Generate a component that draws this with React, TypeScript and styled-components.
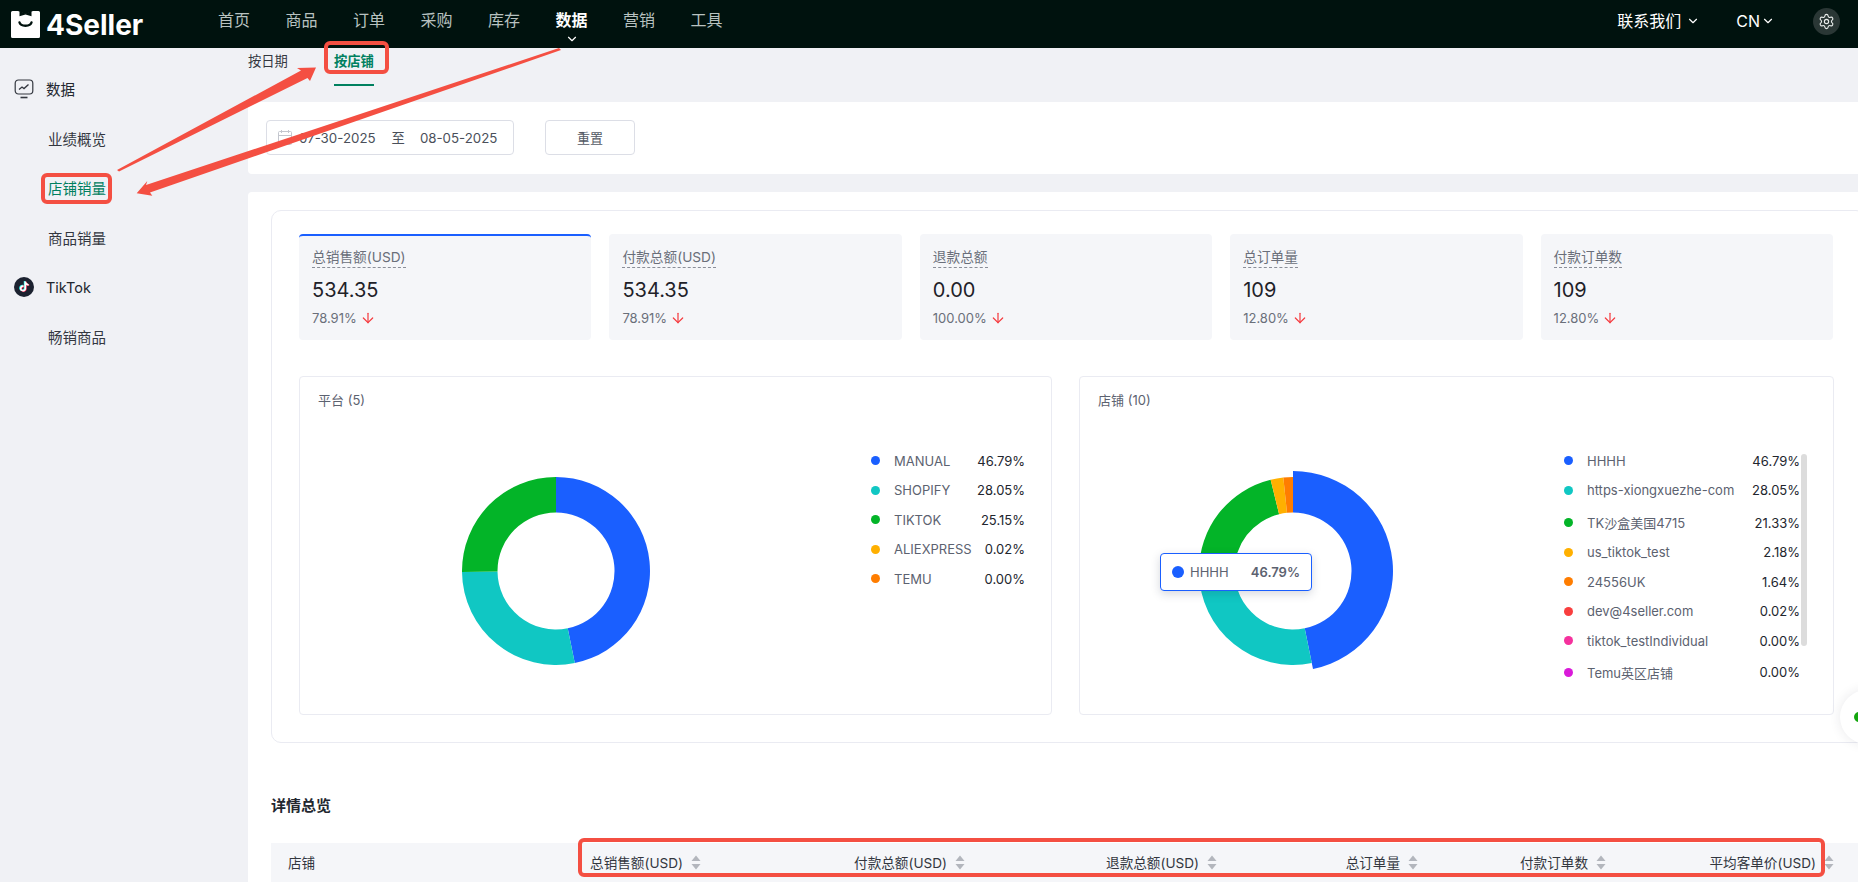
import React from "react";
import styled, { createGlobalStyle } from "styled-components";
import { ArrowDown, ChevronDown, Settings } from "lucide-react";

const FONT = `Inter, "Noto Sans CJK SC", sans-serif`;

const Global = createGlobalStyle`
  html, body { margin: 0; padding: 0; background: #f0f1f5; }
  body { font-family: ${FONT}; }
  * { box-sizing: border-box; }
`;

const Page = styled.div`
  position: relative;
  width: 1858px;
  height: 882px;
  overflow: hidden;
  background: #f0f1f5;
  display: flex;
  flex-direction: column;
`;

/* ---------- top bar ---------- */
const TopBar = styled.header`
  flex: none;
  height: 48px;
  background: #00120e;
  display: flex;
  align-items: center;
  color: #fff;
  padding: 0 18px 0 11px;
`;
const Logo = styled.div`
  width: 207px;
  display: flex;
  align-items: center;
  gap: 6px;
  margin-top: 1px;
`;
const LogoText = styled.span`
  font-size: 28px;
  font-weight: 700;
  line-height: 1;
  letter-spacing: 0;
  color: #fff;
`;
const Nav = styled.nav`
  display: flex;
  gap: 35.5px;
  flex: 1;
`;
const NavItem = styled.span<{ $active?: boolean }>`
  position: relative;
  font-size: 16px;
  line-height: 24px;
  margin-top: -8px;
  color: ${(p) => (p.$active ? "#fff" : "#b8c2c0")};
  font-weight: ${(p) => (p.$active ? 600 : 400)};
  svg {
    position: absolute;
    left: 9px;
    top: 24px;
  }
`;
const TopRight = styled.div`
  display: flex;
  align-items: center;
  margin-top: -6px;
`;
const TopLink = styled.span<{ $mr: number; $gap: number }>`
  display: flex;
  align-items: center;
  gap: ${(p) => p.$gap}px;
  font-size: 16px;
  line-height: 24px;
  margin-right: ${(p) => p.$mr}px;
  color: #fff;
`;
const GearBubble = styled.span`
  width: 27px;
  height: 27px;
  border-radius: 50%;
  background: #2a3735;
  display: flex;
  align-items: center;
  justify-content: center;
  color: #e8ecea;
`;

/* ---------- body ---------- */
const Body = styled.div`
  flex: 1;
  display: flex;
  min-height: 0;
`;
const Sidebar = styled.aside`
  flex: none;
  width: 248px;
  padding: 16px 0 0 14px;
`;
const SideGroup = styled.div`
  display: flex;
  align-items: center;
  gap: 12px;
  height: 49.6px;
  font-size: 14.5px;
  color: #23272f;
`;
const SideLink = styled.div<{ $active?: boolean }>`
  height: 49.6px;
  padding-left: 34px;
  display: flex;
  align-items: center;
  font-size: 14.5px;
  color: ${(p) => (p.$active ? "#00805f" : "#33373f")};
`;
const Main = styled.main`
  flex: 1;
  min-width: 0;
  display: flex;
  flex-direction: column;
`;
const Tabs = styled.div`
  flex: none;
  height: 54px;
  display: flex;
  gap: 46px;
`;
const Tab = styled.div<{ $active?: boolean }>`
  height: 38px;
  padding-top: 3px;
  font-size: 13.3px;
  line-height: 20px;
  color: ${(p) => (p.$active ? "#00805f" : "#33373f")};
  font-weight: ${(p) => (p.$active ? 700 : 400)};
  border-bottom: 2px solid ${(p) => (p.$active ? "#00805f" : "transparent")};
`;
const FilterCard = styled.section`
  flex: none;
  height: 72px;
  background: #fff;
  border-radius: 4px 0 0 4px;
  padding: 18px;
  display: flex;
  gap: 31px;
`;
const DateBox = styled.div`
  width: 248px;
  height: 35px;
  border: 1px solid #dcdee6;
  border-radius: 4px;
  display: flex;
  align-items: center;
  padding-left: 11px;
  font-size: 13.3px;
  color: #4a4f5a;
`;
const DateValue = styled.span<{ $ml: number }>`
  margin-left: ${(p) => p.$ml}px;
`;
const ResetButton = styled.button`
  width: 90px;
  height: 35px;
  border: 1px solid #dcdee6;
  border-radius: 4px;
  background: #fff;
  font-family: ${FONT};
  font-size: 13px;
  color: #555a65;
  padding: 0;
`;
const ContentCard = styled.section`
  margin-top: 18px;
  flex: 1;
  min-height: 0;
  background: #fff;
  border-radius: 4px 0 0 0;
  padding: 18px 0 0 23px;
`;
const Panel = styled.div`
  width: 1595px;
  height: 533px;
  border: 1px solid #eaebf2;
  border-radius: 10px;
  padding: 23px 0 0 27px;
`;
const KpiRow = styled.div`
  width: 1534px;
  display: grid;
  grid-template-columns: repeat(5, 1fr);
  gap: 18px;
`;
const KpiCard = styled.div<{ $active?: boolean }>`
  height: 106px;
  background: #f5f6f9;
  border-radius: 4px;
  border-top: 2px solid ${(p) => (p.$active ? "#1a5fff" : "#f5f6f9")};
  padding: 10px 13px 0;
`;
const KpiLabel = styled.span`
  display: inline-block;
  font-size: 13.7px;
  line-height: 20px;
  color: #6a6f7a;
  border-bottom: 1px dashed #8a8e98;
`;
const KpiValue = styled.div`
  margin-top: 8px;
  font-size: 20px;
  line-height: 28px;
  color: #1f2229;
`;
const KpiChange = styled.div`
  margin-top: 4px;
  display: flex;
  align-items: center;
  gap: 3px;
  font-size: 13px;
  line-height: 20px;
  color: #6a6f7a;
  svg {
    color: #f5393d;
  }
`;
const ChartRow = styled.div`
  margin-top: 36px;
  width: 1535px;
  display: grid;
  grid-template-columns: 753px 755px;
  gap: 27px;
`;
const ChartPanel = styled.div`
  position: relative;
  height: 339px;
  border: 1px solid #eaebf2;
  border-radius: 4px;
`;
const ChartTitle = styled.div`
  position: absolute;
  left: 18px;
  top: 13px;
  font-size: 13px;
  line-height: 20px;
  color: #5c6270;
`;
const DonutSvg = styled.svg<{ $left: number }>`
  position: absolute;
  left: ${(p) => p.$left}px;
  top: 89px;
`;
const Legend = styled.div<{ $left: number; $width: number }>`
  position: absolute;
  left: ${(p) => p.$left}px;
  top: 69px;
  width: ${(p) => p.$width}px;
`;
const LegendRow = styled.div<{ $mt?: number }>`
  height: 29.5px;
  margin-top: ${(p) => p.$mt ?? 0}px;
  display: flex;
  align-items: center;
  font-size: 13px;
  color: #5c6270;
`;
const Dot = styled.i<{ $c: string }>`
  flex: none;
  width: 9px;
  height: 9px;
  border-radius: 50%;
  background: ${(p) => p.$c};
  margin-right: 14px;
`;
const LegendName = styled.span`
  flex: 1;
  white-space: nowrap;
`;
const LegendValue = styled.span`
  color: #22262e;
`;
const ScrollThumb = styled.div`
  position: absolute;
  left: 721px;
  top: 77px;
  width: 6px;
  height: 192px;
  border-radius: 3px;
  background: #dcdcdc;
`;
const Tooltip = styled.div`
  position: absolute;
  left: 80px;
  top: 176px;
  width: 152px;
  height: 38px;
  background: #fff;
  border: 1px solid #1a5fff;
  border-radius: 4px;
  box-shadow: 0 3px 10px rgba(30, 40, 70, 0.18);
  display: flex;
  align-items: center;
  padding: 0 11px;
  font-size: 13px;
  color: #5c6270;
`;
const TipDot = styled.i`
  width: 12px;
  height: 12px;
  border-radius: 50%;
  background: #1a5fff;
  margin-right: 6px;
`;
const TipValue = styled.b`
  margin-left: auto;
  font-weight: 600;
`;
const SectionTitle = styled.h3`
  margin: 52px 0 0;
  font-size: 15px;
  line-height: 22px;
  font-weight: 600;
  color: #23272f;
`;
const TableHead = styled.div`
  margin-top: 26px;
  height: 44px;
  background: #f5f6f9;
  display: grid;
  grid-template-columns: 180px 256px 264px 252px 201px 188px 228px 1fr;
  align-items: center;
  font-size: 13.6px;
  color: #33373f;
  padding-bottom: 6px;
`;
const HeadFirst = styled.div`
  padding-left: 17px;
`;
const HeadCell = styled.div`
  display: flex;
  justify-content: flex-end;
  align-items: center;
  gap: 8px;
  padding-right: 6px;
  white-space: nowrap;
`;
const FloatBubble = styled.div`
  position: absolute;
  left: 1840px;
  top: 690px;
  width: 54px;
  height: 54px;
  border-radius: 50%;
  background: #fff;
  box-shadow: 0 0 12px rgba(40, 40, 60, 0.1);
  display: flex;
  align-items: center;
  padding-left: 14px;
`;
const FloatDot = styled.i`
  width: 10px;
  height: 10px;
  border-radius: 50%;
  background: #14a60e;
`;
const Annotations = styled.svg`
  position: absolute;
  left: 0;
  top: 0;
  pointer-events: none;
`;

/* ---------- drawings ---------- */
const LogoMark = () => (
  <svg width="29" height="27" viewBox="0 0 29 27">
    <path d="M1.5 0H7l7.5 3L22 0h5.5A1.5 1.5 0 0 1 29 1.5v24a1.5 1.5 0 0 1-1.5 1.5h-26A1.5 1.5 0 0 1 0 25.5v-24A1.5 1.5 0 0 1 1.5 0Z" fill="#fff" />
    <path d="M8.5 0 14.5 2.6 20.5 0v5.2L14.5 3.6 8.5 5.2Z" fill="#00120e" />
    <path d="M8.5 11.5c1.2 4.3 10.8 4.3 12 0" fill="none" stroke="#00120e" strokeWidth="2.4" strokeLinecap="round" />
  </svg>
);

const ChartIcon = () => (
  <svg width="20" height="20" viewBox="0 0 20 20" fill="none" stroke="#33373f">
    <rect x="1.2" y="1" width="17.6" height="14" rx="3.2" strokeWidth="1.2" />
    <path d="M5 10.5 8 8l2 1.6L14.5 5.5" strokeWidth="1.3" />
    <path d="M6.5 18.5h7" strokeWidth="1.6" />
  </svg>
);

const TT =
  "M12.525.02c1.31-.02 2.61-.01 3.91-.02.08 1.53.63 3.09 1.75 4.17 1.12 1.11 2.7 1.62 4.24 1.79v4.03c-1.44-.05-2.89-.35-4.2-.97-.57-.26-1.1-.59-1.62-.93-.01 2.92.01 5.84-.02 8.75-.08 1.4-.54 2.79-1.35 3.94-1.31 1.92-3.58 3.17-5.91 3.21-1.43.08-2.86-.31-4.08-1.03-2.02-1.19-3.44-3.37-3.65-5.71-.02-.5-.03-1-.01-1.49.18-1.9 1.12-3.72 2.58-4.96 1.66-1.44 3.98-2.13 6.15-1.72.02 1.48-.04 2.96-.04 4.44-.99-.32-2.15-.23-3.02.37-.63.41-1.11 1.04-1.36 1.75-.21.51-.15 1.07-.14 1.61.24 1.64 1.82 3.02 3.5 2.87 1.12-.01 2.19-.66 2.77-1.61.19-.33.4-.67.41-1.06.1-1.79.06-3.57.07-5.36.01-4.03-.01-8.05.02-12.07z";

const TikTokIcon = () => (
  <svg width="20" height="20" viewBox="0 0 20 20">
    <circle cx="10" cy="10" r="10" fill="#1c2230" />
    <g transform="translate(5.2 4.4) scale(.42)">
      <path d={TT} fill="#25f4ee" transform="translate(-1.6 -1)" />
      <path d={TT} fill="#fe2c55" transform="translate(1.4 1)" />
      <path d={TT} fill="#fff" />
    </g>
  </svg>
);

const SortIcon = () => (
  <svg width="10" height="15" viewBox="0 0 10 15" fill="#b3b6bd">
    <path d="M5 0.5 9.5 6H.5Z" />
    <path d="M.5 9h9L5 14.5Z" />
  </svg>
);

const CalendarIcon = () => (
  <svg width="14" height="15" viewBox="0 0 14 15" fill="none" stroke="#c4c6ce" strokeWidth="1">
    <rect x=".5" y="1.5" width="13" height="13" rx="1" />
    <path d="M.5 5.5h13M3.5 0v3M10.5 0v3" />
  </svg>
);

type Seg = { pct: number; color: string; outer: number };

const arc = (cx: number, cy: number, ro: number, ri: number, a0: number, a1: number) => {
  const pt = (r: number, a: number) => {
    const t = ((a - 90) * Math.PI) / 180;
    return `${(cx + r * Math.cos(t)).toFixed(2)} ${(cy + r * Math.sin(t)).toFixed(2)}`;
  };
  const large = a1 - a0 > 180 ? 1 : 0;
  return `M${pt(ro, a0)}A${ro} ${ro} 0 ${large} 1 ${pt(ro, a1)}L${pt(ri, a1)}A${ri} ${ri} 0 ${large} 0 ${pt(ri, a0)}Z`;
};

const Donut = ({ segs, left }: { segs: Seg[]; left: number }) => {
  let a = 0;
  const total = segs.reduce((s, x) => s + x.pct, 0);
  return (
    <DonutSvg $left={left} width="210" height="210" viewBox="0 0 210 210">
      {segs.map((s) => {
        const a0 = a;
        a += (s.pct / total) * 360;
        return <path key={s.color} d={arc(105, 105, s.outer, 58.5, a0, a)} fill={s.color} />;
      })}
    </DonutSvg>
  );
};

/* ---------- data ---------- */
const C = {
  blue: "#1a5fff",
  teal: "#10c7c3",
  green: "#03b428",
  yellow: "#ffb000",
  orange: "#ff7d00",
  red: "#f93e3e",
  pink: "#f5319d",
  purple: "#d91ad9",
};

const kpis = [
  { label: "总销售额(USD)", value: "534.35", change: "78.91%", active: true },
  { label: "付款总额(USD)", value: "534.35", change: "78.91%" },
  { label: "退款总额", value: "0.00", change: "100.00%" },
  { label: "总订单量", value: "109", change: "12.80%" },
  { label: "付款订单数", value: "109", change: "12.80%" },
];

const platforms = [
  { name: "MANUAL", pct: "46.79%", c: C.blue },
  { name: "SHOPIFY", pct: "28.05%", c: C.teal },
  { name: "TIKTOK", pct: "25.15%", c: C.green },
  { name: "ALIEXPRESS", pct: "0.02%", c: C.yellow },
  { name: "TEMU", pct: "0.00%", c: C.orange },
];

const stores = [
  { name: "HHHH", pct: "46.79%", c: C.blue },
  { name: "https-xiongxuezhe-com", pct: "28.05%", c: C.teal },
  { name: "TK沙盒美国4715", pct: "21.33%", c: C.green, mt: 3 },
  { name: "us_tiktok_test", pct: "2.18%", c: C.yellow },
  { name: "24556UK", pct: "1.64%", c: C.orange },
  { name: "dev@4seller.com", pct: "0.02%", c: C.red },
  { name: "tiktok_testIndividual", pct: "0.00%", c: C.pink },
  { name: "Temu英区店铺", pct: "0.00%", c: C.purple, mt: 2 },
];

const columns = ["总销售额(USD)", "付款总额(USD)", "退款总额(USD)", "总订单量", "付款订单数", "平均客单价(USD)"];

export default function App() {
  return (
    <Page>
      <Global />
      <TopBar>
        <Logo>
          <LogoMark />
          <LogoText>4Seller</LogoText>
        </Logo>
        <Nav>
          {["首页", "商品", "订单", "采购", "库存"].map((t) => (
            <NavItem key={t}>{t}</NavItem>
          ))}
          <NavItem $active>
            数据
            <ChevronDown size={14} strokeWidth={2} color="#fff" />
          </NavItem>
          {["营销", "工具"].map((t) => (
            <NavItem key={t}>{t}</NavItem>
          ))}
        </Nav>
        <TopRight>
          <TopLink $mr={36} $gap={5}>
            联系我们
            <ChevronDown size={14} strokeWidth={2} />
          </TopLink>
          <TopLink $mr={38} $gap={1}>
            CN
            <ChevronDown size={14} strokeWidth={2} />
          </TopLink>
          <GearBubble>
            <Settings size={17} strokeWidth={1.6} />
          </GearBubble>
        </TopRight>
      </TopBar>
      <Body>
        <Sidebar>
          <SideGroup>
            <ChartIcon />
            数据
          </SideGroup>
          <SideLink>业绩概览</SideLink>
          <SideLink $active>店铺销量</SideLink>
          <SideLink>商品销量</SideLink>
          <SideGroup>
            <TikTokIcon />
            TikTok
          </SideGroup>
          <SideLink>畅销商品</SideLink>
        </Sidebar>
        <Main>
          <Tabs>
            <Tab>按日期</Tab>
            <Tab $active>按店铺</Tab>
          </Tabs>
          <FilterCard>
            <DateBox>
              <CalendarIcon />
              <DateValue $ml={7}>07-30-2025</DateValue>
              <DateValue $ml={16}>至</DateValue>
              <DateValue $ml={15}>08-05-2025</DateValue>
            </DateBox>
            <ResetButton>重置</ResetButton>
          </FilterCard>
          <ContentCard>
            <Panel>
              <KpiRow>
                {kpis.map((k) => (
                  <KpiCard key={k.label} $active={k.active}>
                    <KpiLabel>{k.label}</KpiLabel>
                    <KpiValue>{k.value}</KpiValue>
                    <KpiChange>
                      {k.change}
                      <ArrowDown size={16} strokeWidth={1.8} />
                    </KpiChange>
                  </KpiCard>
                ))}
              </KpiRow>
              <ChartRow>
                <ChartPanel>
                  <ChartTitle>平台 (5)</ChartTitle>
                  <Donut
                    left={151}
                    segs={[
                      { pct: 46.79, color: C.blue, outer: 94 },
                      { pct: 28.05, color: C.teal, outer: 94 },
                      { pct: 25.15, color: C.green, outer: 94 },
                    ]}
                  />
                  <Legend $left={571} $width={154}>
                    {platforms.map((r) => (
                      <LegendRow key={r.name}>
                        <Dot $c={r.c} />
                        <LegendName>{r.name}</LegendName>
                        <LegendValue>{r.pct}</LegendValue>
                      </LegendRow>
                    ))}
                  </Legend>
                </ChartPanel>
                <ChartPanel>
                  <ChartTitle>店铺 (10)</ChartTitle>
                  <Donut
                    left={108}
                    segs={[
                      { pct: 46.79, color: C.blue, outer: 100 },
                      { pct: 28.05, color: C.teal, outer: 94 },
                      { pct: 21.33, color: C.green, outer: 94 },
                      { pct: 2.18, color: C.yellow, outer: 94 },
                      { pct: 1.64, color: C.orange, outer: 94 },
                    ]}
                  />
                  <Tooltip>
                    <TipDot />
                    HHHH
                    <TipValue>46.79%</TipValue>
                  </Tooltip>
                  <Legend $left={484} $width={236}>
                    {stores.map((r) => (
                      <LegendRow key={r.name} $mt={r.mt}>
                        <Dot $c={r.c} />
                        <LegendName>{r.name}</LegendName>
                        <LegendValue>{r.pct}</LegendValue>
                      </LegendRow>
                    ))}
                  </Legend>
                  <ScrollThumb />
                </ChartPanel>
              </ChartRow>
            </Panel>
            <SectionTitle>详情总览</SectionTitle>
            <TableHead>
              <HeadFirst>店铺</HeadFirst>
              {columns.map((c) => (
                <HeadCell key={c}>
                  {c}
                  <SortIcon />
                </HeadCell>
              ))}
            </TableHead>
          </ContentCard>
        </Main>
      </Body>
      <FloatBubble>
        <FloatDot />
      </FloatBubble>
      <Annotations width="1858" height="882" viewBox="0 0 1858 882">
        <g fill="#f44f42">
          <path d="M117 170 301 70.5 297 68 316 67.5 310 81 307.5 78 119 171.5Z" />
          <path d="M559 48 561 50 150 192.5 152.3 195.7 136.7 193.3 147.3 181 146 185Z" />
        </g>
        <g fill="none" stroke="#f44f42" strokeWidth="4">
          <rect x="326" y="43" width="61" height="29" rx="4" />
          <rect x="43" y="175" width="67" height="27" rx="4" />
          <rect x="580" y="840" width="1243" height="35" rx="4" />
        </g>
      </Annotations>
    </Page>
  );
}
